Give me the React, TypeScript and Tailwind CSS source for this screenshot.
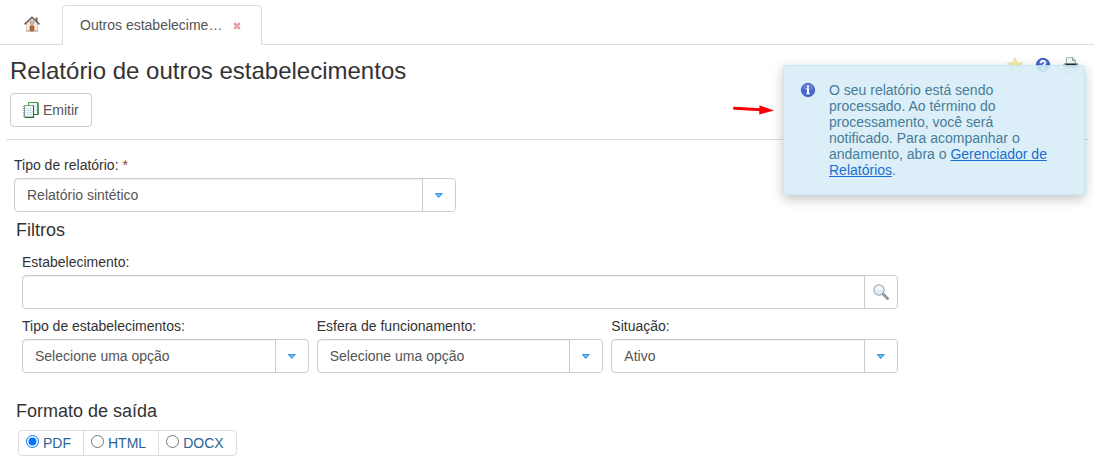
import { useState, type ReactNode } from 'react';

const FORMATS = ['PDF', 'HTML', 'DOCX'];

function HomeIcon() {
  return (
    <svg width="16" height="16" viewBox="0 0 16 16" aria-hidden="true">
      <path d="M11.500 1.500h2v4h-2z" fill="#8a5a5a" />
      <path d="M2.500 7.500 8 2l5.500 5.500V15h-11z" fill="#f7e9d8" stroke="#d6c3b4" strokeWidth=".8" />
      <path d="M.6 8.400 8 1.200l7.400 7.200" fill="none" stroke="#5f4e56" strokeWidth="1.500" />
      <path d="M1.400 8.100 8 1.700l6.600 6.400" fill="none" stroke="#a99aa6" strokeWidth=".5" />
      <path d="M6.500 5.200h3v3h-3z" fill="#e4ebf5" stroke="#a07f68" strokeWidth=".8" />
      <path d="M8 5.200v3" stroke="#a07f68" strokeWidth=".5" />
      <path d="M6.200 10h3.600v5H6.200z" fill="#bd6a35" stroke="#87482a" strokeWidth=".8" />
      <path d="M2 15.200h3.500M10.500 15.200H14" stroke="#a99a86" strokeWidth=".8" />
    </svg>
  );
}

function CloseIcon() {
  return (
    <svg width="8" height="8" viewBox="0 0 8 8" aria-hidden="true">
      <path d="m1.200 1.200 5.600 5.600M6.800 1.200 1.200 6.800" stroke="#dc9299" strokeWidth="2.400" />
      <path d="m1.500 1.500 5 5M6.500 1.500l-5 5" stroke="#efbec2" strokeWidth=".8" />
    </svg>
  );
}

function ReportIcon() {
  return (
    <svg width="16" height="16" viewBox="0 0 16 16" aria-hidden="true">
      <path d="M5.500 .5h9.500v12H5.500z" fill="#f2f8ff" stroke="#3f9d4a" />
      <path d="M15 1v11.500h-4" fill="none" stroke="#24752f" strokeWidth="1.100" />
      <path d="M1.500 3.500h9v11.800h-9z" fill="#f6faff" stroke="#6f9d76" strokeWidth=".9" />
      <path d="M10.500 3.500v11.900H2" fill="none" stroke="#2a6b33" strokeWidth="1.100" />
      <path d="M3.500 6.500H9M3.500 8.500H9M3.500 10.500H9M3.500 12.500H9M12 4.500h2M12 6.500h2M12 8.500h2" stroke="#cbdcf2" />
      <path d="M0 4.500h2.200M0 6.500h2.200M0 8.500h2.200M0 10.500h2.200M0 12.500h2.200M0 14.500h2.200" stroke="#7c8682" strokeWidth=".8" />
    </svg>
  );
}

function StarIcon() {
  return (
    <svg width="16" height="16" viewBox="0 0 16 16" aria-hidden="true">
      <path d="m8 .6 1.800 5.300 5.700.1-4.500 3.500 1.600 5.600L8 11.800l-4.600 3.300L5 9.500.5 6l5.700-.1z" fill="#fbeeaa" stroke="#eadf9e" strokeWidth=".9" />
    </svg>
  );
}

function BlueBall({ children }: { children: ReactNode }) {
  return (
    <svg width="16" height="16" viewBox="0 0 16 16" aria-hidden="true">
      <circle cx="8" cy="8" r="6.700" fill="#3557cb" stroke="#3049a8" strokeWidth=".8" />
      <path d="M2.500 7a5.500 5.300 0 0 1 11 0q-5.500 2-11 0" fill="#7292e4" opacity=".5" />
      {children}
    </svg>
  );
}

function HelpIcon() {
  return (
    <BlueBall>
      <path d="M5.700 6.300c0-3 4.700-2.900 4.600-.2 0 1.600-2.300 1.500-2.300 3" fill="none" stroke="#fff" strokeWidth="1.900" />
      <path d="M7 10.300h2v1.900H7z" fill="#fff" />
    </BlueBall>
  );
}

function InfoIcon() {
  return (
    <BlueBall>
      <path d="M7 3.500h2v2H7zM6.200 6.300H9v4.900h1v1.100H6.100v-1.100H7V7.400h-.8z" fill="#fff" />
    </BlueBall>
  );
}

function PrinterIcon() {
  return (
    <svg width="16" height="16" viewBox="0 0 16 16" aria-hidden="true">
      <path d="M3.500 7V.6h6.400l2.600 2.600V7z" fill="#f1f8f8" stroke="#8fa2a2" strokeWidth=".8" />
      <path d="M9.500.8v2.800h3" fill="#bfd3d3" stroke="#6f8787" strokeWidth=".7" />
      <path d="M1.500 6.500h13l1 1.500v5H.5V8z" fill="#b9bcbf" stroke="#83878a" strokeWidth=".6" />
      <path d="M2.500 6.800h11v3.400h-11z" fill="#27292b" />
      <path d="M3.500 11.500h9v4h-9z" fill="#fff" stroke="#9b9fa2" strokeWidth=".7" />
      <path d="M5 13.500h6" stroke="#c2c6c8" strokeWidth=".8" />
    </svg>
  );
}

function SearchIcon() {
  return (
    <svg width="16" height="16" viewBox="0 0 16 16" aria-hidden="true">
      <path d="m10 10 4.500 4.500" stroke="#7d7d7d" strokeWidth="2.600" strokeLinecap="round" />
      <path d="m10.200 10.200 4.300 4.300" stroke="#c9c9c9" strokeWidth="1" />
      <circle cx="6" cy="6" r="5.200" fill="#dcebfa" stroke="#a6a6a6" strokeWidth="1.100" />
      <path d="M2.500 5.500a3.500 3.500 0 0 1 7 0q-3.500 1.200-7 0" fill="#f5faff" />
    </svg>
  );
}

function SelectField({ id, label, required, options }: { id: string; label: string; required?: boolean; options: string[] }) {
  return (
    <div>
      <label htmlFor={id} className="block h-[21px] leading-4">
        {label} {required && <span className="text-[#8a4540]">*</span>}
      </label>
      <div className="relative">
        <select
          id={id}
          className="block h-[34px] w-full appearance-none rounded border border-[#ccc] bg-white pr-9 pl-3 text-[#555] shadow-[inset_0_1px_1px_rgba(0,0,0,0.075)]"
        >
          {options.map((option) => (
            <option key={option}>{option}</option>
          ))}
        </select>
        <span className="pointer-events-none absolute inset-y-px right-px flex w-[33px] items-center justify-center rounded-r border-l border-[#ccc] bg-white">
          <svg width="8" height="5" viewBox="0 0 8 5" aria-hidden="true">
            <path d="M.6.6h6.300L3.700 4.100z" fill="#84d0f5" stroke="#3f97e0" strokeWidth="1.200" />
          </svg>
        </span>
      </div>
    </div>
  );
}

function Notification() {
  return (
    <div className="absolute top-[65px] right-[9px] w-[302px]">
      <svg className="absolute top-[38px] right-full mr-[9px]" width="42" height="14" viewBox="0 0 42 14" aria-hidden="true">
        <path d="M2.500 5.300 29 6.800" stroke="#fb0007" strokeWidth="3" strokeLinecap="round" />
        <path d="M27.500 2.300 42 7.500 27.200 11.500z" fill="#fb0007" />
      </svg>
      <div
        role="status"
        className="flex rounded-[3px] border border-[#bce8f1] bg-[#d9edf7] py-4 pr-9 pl-4 leading-4 text-[#31708f] opacity-90 shadow-[0_4px_12px_rgba(0,0,0,0.25)]"
      >
        <div className="w-[29px] shrink-0">
          <InfoIcon />
        </div>
        <p>
          O seu relatório está sendo processado. Ao término do processamento, você será notificado. Para acompanhar o
          andamento, abra o <a href="#gerenciador" className="text-[#005fcf] underline">Gerenciador de Relatórios</a>.
        </p>
      </div>
    </div>
  );
}

export default function App() {
  const [format, setFormat] = useState('PDF');

  return (
    <div className="relative min-h-screen bg-white font-['Liberation_Sans',Arial,sans-serif] text-[14px] text-[#333]">
      <nav className="flex h-[45px] items-end border-b border-[#ddd]">
        <a href="#inicio" aria-label="Início" className="flex h-10 w-[62px] items-center justify-center pl-[2px]">
          <HomeIcon />
        </a>
        <div className="-mb-px flex h-10 w-[200px] items-center rounded-t border border-b-0 border-[#ddd] bg-white pl-[17px] text-[#555]">
          <a href="#outros">Outros estabelecime…</a>
          <button type="button" aria-label="Fechar" className="ml-[11px]">
            <CloseIcon />
          </button>
        </div>
      </nav>

      <header className="mx-[6px] border-b border-[#ddd] px-1 pt-3 pb-3">
        <div className="flex items-start justify-between">
          <h1 className="text-[24px] leading-7">Relatório de outros estabelecimentos</h1>
          <div className="flex gap-3 pr-[5px]">
            <button type="button" aria-label="Favorito"><StarIcon /></button>
            <button type="button" aria-label="Ajuda"><HelpIcon /></button>
            <button type="button" aria-label="Imprimir"><PrinterIcon /></button>
          </div>
        </div>
        <button type="button" className="mt-2 flex h-[34px] items-center gap-1 rounded border border-[#ccc] px-3 text-[#555]">
          <ReportIcon />
          Emitir
        </button>
      </header>

      <main className="px-[14px] pt-[17px] pb-[7px]">
        <div className="max-w-[442px]">
          <SelectField id="tipo" label="Tipo de relatório:" required options={['Relatório sintético', 'Relatório analítico']} />
        </div>

        <h2 className="mt-2 ml-[2px] text-[18px] leading-5">Filtros</h2>
        <div className="mt-[14px] ml-2 max-w-[876px]">
          <label htmlFor="estabelecimento" className="block h-[21px] leading-4">Estabelecimento:</label>
          <div className="flex h-[34px] rounded border border-[#ccc]">
            <input
              id="estabelecimento"
              type="text"
              className="min-w-0 flex-1 rounded-l px-3 text-[#555] shadow-[inset_0_1px_1px_rgba(0,0,0,0.075)]"
            />
            <button type="button" aria-label="Pesquisar" className="flex w-[33px] items-center justify-center border-l border-[#ccc]">
              <SearchIcon />
            </button>
          </div>
          <div className="mt-[9px] grid grid-cols-3 gap-2">
            <SelectField id="tipo-estabelecimentos" label="Tipo de estabelecimentos:" options={['Selecione uma opção']} />
            <SelectField id="esfera" label="Esfera de funcionamento:" options={['Selecione uma opção']} />
            <SelectField id="situacao" label="Situação:" options={['Ativo', 'Inativo']} />
          </div>
        </div>

        <fieldset className="mt-7 ml-[2px]">
          <legend className="text-[18px] leading-5">Formato de saída</legend>
          <div className="mt-[9px] ml-[2px] flex h-[26px] w-fit divide-x divide-[#ddd] rounded border border-[#ddd] text-[#2a6496]">
            {FORMATS.map((name) => (
              <label key={name} className="flex items-center gap-1 pr-3 pl-[7px]">
                <input
                  type="radio"
                  name="formato"
                  className="mb-[3px] size-[13px]"
                  checked={format === name}
                  onChange={() => setFormat(name)}
                />
                {name}
              </label>
            ))}
          </div>
        </fieldset>
      </main>

      <Notification />
    </div>
  );
}
